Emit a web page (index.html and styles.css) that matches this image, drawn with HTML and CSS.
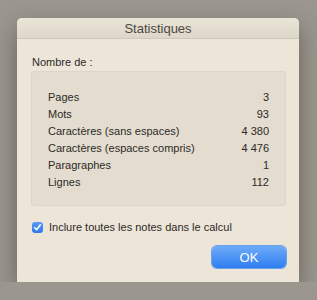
FILE: index.html
```html
<!DOCTYPE html>
<html lang="fr">
<head>
    <meta charset="UTF-8">
    <title>Statistiques</title>
    <link rel="stylesheet" href="styles.css">
</head>
<body>

<div class="window">
    <div class="titlebar">Statistiques</div>
    <div class="content">
        <div class="group-label">Nombre de :</div>
        <div class="stats-box">
            <div class="stat-row"><span>Pages</span><span>3</span></div>
            <div class="stat-row"><span>Mots</span><span>93</span></div>
            <div class="stat-row"><span>Caractères (sans espaces)</span><span>4 380</span></div>
            <div class="stat-row"><span>Caractères (espaces compris)</span><span>4 476</span></div>
            <div class="stat-row"><span>Paragraphes</span><span>1</span></div>
            <div class="stat-row"><span>Lignes</span><span>112</span></div>
        </div>
        <label class="check">
            <span class="check-box">
                <svg width="9" height="9" viewBox="0 0 9 9"><path d="M1.6 4.8 L3.6 6.8 L7.4 1.8" fill="none" stroke="#fff" stroke-width="1.6" stroke-linecap="round" stroke-linejoin="round"/></svg>
            </span>
            Inclure toutes les notes dans le calcul
        </label>
        <div class="actions">
            <button class="ok-btn">OK</button>
        </div>
    </div>
</div>

</body>
</html>
```

FILE: styles.css
```css
body {
    margin: 0;
    padding: 18px 0 0 17px;
    background-color: #9b978e;
    font-family: "Liberation Sans", Arial, sans-serif;
    color: #2b2a28;
}
.window {
    width: 282px;
    height: 264px;
    background-color: #ede6d8;
    border-radius: 5px 5px 0 0;
    box-shadow: 0 10px 24px rgba(40, 36, 30, 0.45);
    overflow: hidden;
}
.titlebar {
    height: 20px;
    line-height: 21px;
    text-align: center;
    font-size: 13px;
    color: #4a4843;
    background: linear-gradient(#ebe5d7, #ddd7c9);
    border-bottom: 1px solid #cfc9bb;
}
.content {
    padding: 17px 13px 0 14px;
}
.group-label {
    font-size: 11px;
    line-height: 13px;
    margin-left: 1px;
}
.stats-box {
    margin-top: 2px;
    height: 116px;
    padding: 17px 16px 0 16px;
    background-color: #e4ddcf;
    border: 1px solid #ddd6c8;
    border-radius: 3px;
}
.stat-row {
    display: flex;
    justify-content: space-between;
    font-size: 11px;
    line-height: 17px;
}
.check {
    display: flex;
    align-items: center;
    gap: 6px;
    margin-top: 15px;
    margin-left: 1px;
    font-size: 11px;
    line-height: 13px;
}
.check-box {
    width: 11px;
    height: 11px;
    border-radius: 3px;
    background: linear-gradient(#5b9af5, #2f78ee);
    display: flex;
    align-items: center;
    justify-content: center;
}
.actions {
    display: flex;
    justify-content: flex-end;
    margin-top: 12px;
}
.ok-btn {
    width: 74px;
    height: 22px;
    border: none;
    border-radius: 5px;
    background: linear-gradient(#6eabf8, #2f7ef0);
    box-shadow: 0 0 0 1px #6aa2ec;
    color: #fff;
    font-family: "Liberation Sans", Arial, sans-serif;
    font-size: 13px;
    padding: 0;
}
```
